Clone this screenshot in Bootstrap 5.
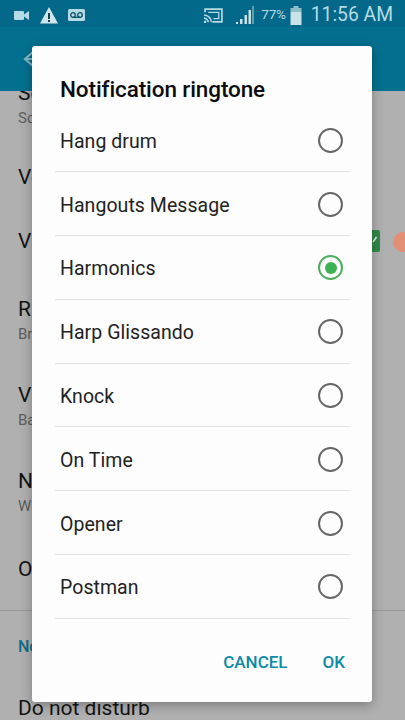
<!DOCTYPE html>
<html lang="en">
<head>
<meta charset="utf-8">
<title>Notification ringtone</title>
<link href="https://cdn.jsdelivr.net/npm/bootstrap@5.3.0/dist/css/bootstrap.min.css" rel="stylesheet">
<style>
html,body{width:405px;height:720px;overflow:hidden;margin:0;background:#b0b0b0;font-family:Roboto,"Noto Sans",sans-serif}
.status-strip{height:27px;background:#03688a;color:#b5dbe4;padding:3px 12px 0 14px}
.clock-text{font-size:19.300px;line-height:1;font-weight:400;margin-left:9px}
.pct-text{font-size:13.500px;line-height:1;letter-spacing:-.2px;margin-left:7px}
.warn-ico{margin-left:11px}
.tape-ico{margin-left:10px}
.sig-ico{margin-left:13px}
.app-strip{height:64px;background:#04708f;padding-left:22px}
.bg-rows{height:629px;overflow:hidden;color:#141414;position:relative}
.bg-row{padding-left:18px;font-size:21px;line-height:24px;white-space:nowrap}
.bg-sub{font-size:15px;line-height:20px;color:#5e5e5e;margin-top:3px}
.r0{height:64px;margin-top:-10px}
.r1{height:64px;padding-top:20px}
.r2{height:64px;padding-top:20px}
.r3{height:87px;padding-top:24px}
.r4{height:86px;padding-top:23px}
.r5{height:88px;padding-top:23px}
.r6{height:77px;padding-top:23px;border-bottom:1px solid #989898}
.head-row{height:85px;padding-top:24px;color:#0b6f86;font-size:16px;font-weight:500}
.toggle-box{right:25px;top:139px;width:14px;height:22px;border-radius:2px;background:#2f8a48}
.toggle-dot{right:-8px;top:141px;width:20px;height:20px;border-radius:50%;background:#e38f75}
.ring-dialog{position:absolute;left:32px;top:46px;width:340px;height:656px;background:#fdfdfe;border-radius:3px;box-shadow:0 3px 12px rgba(0,0,0,.3)}
.dialog-title{height:62.500px;padding:30px 0 0 28px;font-size:22.500px;line-height:27px;font-weight:500;color:#0c0c0c;letter-spacing:-.1px}
.tone-list{margin:0 22px 0 23px;height:511px}
.tone-row{height:63.800px;border-bottom:1px solid #e3e3e3;font-size:19.500px;color:#222;padding:3px 7px 0 5px;letter-spacing:.05px}
.tone-radio{width:25px;height:25px;border:2px solid #666;border-radius:50%;margin-top:-2px;flex:none}
.tone-on{border-color:#4cae5b;position:relative}
.tone-on::after{content:"";position:absolute;left:4.500px;top:4.500px;width:12px;height:12px;border-radius:50%;background:#3db253}
.dlg-btns{gap:35px;padding:30px 27px 0 0;font-size:17px;font-weight:500;color:#0b8ba6;line-height:24px;height:82px}
</style>
</head>
<body>
<div class="status-strip d-flex align-items-center">
  <svg width="15" height="11" viewBox="0 0 15 11"><rect x="0" y="1" width="10" height="9" rx="1" fill="#b5dbe4"/><path d="M10 4.500 15 1v9l-5-3.500z" fill="#b5dbe4"/></svg>
  <svg class="warn-ico" width="18" height="17" viewBox="0 0 18 17"><path d="M9 0 18 16.500H0z" fill="#cfe6ec"/><rect x="8" y="6" width="2" height="6" fill="#173f4c"/><rect x="8" y="13" width="2" height="2" fill="#173f4c"/></svg>
  <svg class="tape-ico" width="17" height="12" viewBox="0 0 17 12"><rect width="17" height="12" rx="1.500" fill="#b5dbe4"/><circle cx="5" cy="6" r="2.300" fill="none" stroke="#0b5068" stroke-width="1.300"/><circle cx="12" cy="6" r="2.300" fill="none" stroke="#0b5068" stroke-width="1.300"/><path d="M5 8.300h7" stroke="#0b5068" stroke-width="1.300"/></svg>
  <svg class="ms-auto" width="19" height="15" viewBox="0 0 18 14"><path d="M1 4V1h16v12H8" fill="none" stroke="#b5dbe4" stroke-width="1.600"/><path d="M4 4h10v6H9" fill="none" stroke="#b5dbe4" stroke-width="1.200"/><path d="M0 6.500c4 0 7 3.500 7 7M0 9.500c2.300 0 4 2 4 4" fill="none" stroke="#b5dbe4" stroke-width="1.500"/><circle cx="1" cy="13" r="1.200" fill="#b5dbe4"/></svg>
  <svg class="sig-ico" width="18" height="18" viewBox="0 0 18 18"><path d="M0 18h2v-2H0zM4 18h2.500v-5H4zM8.500 18H11V9H8.500z" fill="#c6e2e9"/><path d="M12.500 18H15V4h-2.500z" fill="#c6e2e9"/><path d="M16 18h2V0h-2z" fill="#5f9db0"/></svg>
  <span class="pct-text">77%</span>
  <svg class="ms-1" width="12" height="19" viewBox="0 0 12 19"><rect x="3.500" y="0" width="5" height="3" fill="#8fbecb"/><rect x="0.500" y="2" width="11" height="4" fill="#8fbecb"/><rect x="0.500" y="6" width="11" height="13" fill="#c9e2e8"/></svg>
  <span class="clock-text">11:56 AM</span>
</div>
<div class="app-strip d-flex align-items-center">
  <svg width="20" height="20" viewBox="0 0 20 20"><path d="M11 3 3 10l8 7M3 10h16" fill="none" stroke="#7fb8c9" stroke-width="2.200"/></svg>
</div>
<div class="bg-rows">
  <div class="bg-row r0"><div>Sound</div><div class="bg-sub">Sound mode</div></div>
  <div class="bg-row r1">Volume</div>
  <div class="bg-row r2">Vibrations</div>
  <div class="bg-row r3"><div>Ringtones</div><div class="bg-sub">Bright morning</div></div>
  <div class="bg-row r4"><div>Vibration pattern</div><div class="bg-sub">Basic call</div></div>
  <div class="bg-row r5"><div>Notification sound</div><div class="bg-sub">Whistle</div></div>
  <div class="bg-row r6">Other sounds</div>
  <div class="bg-row head-row">Notifications</div>
  <div class="bg-row">Do not disturb</div>
  <span class="toggle-box position-absolute"><svg class="d-block" width="14" height="22" viewBox="0 0 14 22"><path d="M7 12 10.500 7" stroke="#e6f0e6" stroke-width="1.500" fill="none"/></svg></span>
  <span class="toggle-dot position-absolute"></span>
</div>
<div class="ring-dialog" role="dialog">
  <div class="dialog-title">Notification ringtone</div>
  <div class="tone-list">
    <div class="tone-row d-flex align-items-center justify-content-between"><span>Hang drum</span><span class="tone-radio"></span></div>
    <div class="tone-row d-flex align-items-center justify-content-between"><span>Hangouts Message</span><span class="tone-radio"></span></div>
    <div class="tone-row d-flex align-items-center justify-content-between"><span>Harmonics</span><span class="tone-radio tone-on"></span></div>
    <div class="tone-row d-flex align-items-center justify-content-between"><span>Harp Glissando</span><span class="tone-radio"></span></div>
    <div class="tone-row d-flex align-items-center justify-content-between"><span>Knock</span><span class="tone-radio"></span></div>
    <div class="tone-row d-flex align-items-center justify-content-between"><span>On Time</span><span class="tone-radio"></span></div>
    <div class="tone-row d-flex align-items-center justify-content-between"><span>Opener</span><span class="tone-radio"></span></div>
    <div class="tone-row d-flex align-items-center justify-content-between"><span>Postman</span><span class="tone-radio"></span></div>
  </div>
  <div class="dlg-btns d-flex justify-content-end"><span>CANCEL</span><span>OK</span></div>
</div>
<script src="https://cdn.jsdelivr.net/npm/bootstrap@5.3.0/dist/js/bootstrap.bundle.min.js"></script>
</body>
</html>
